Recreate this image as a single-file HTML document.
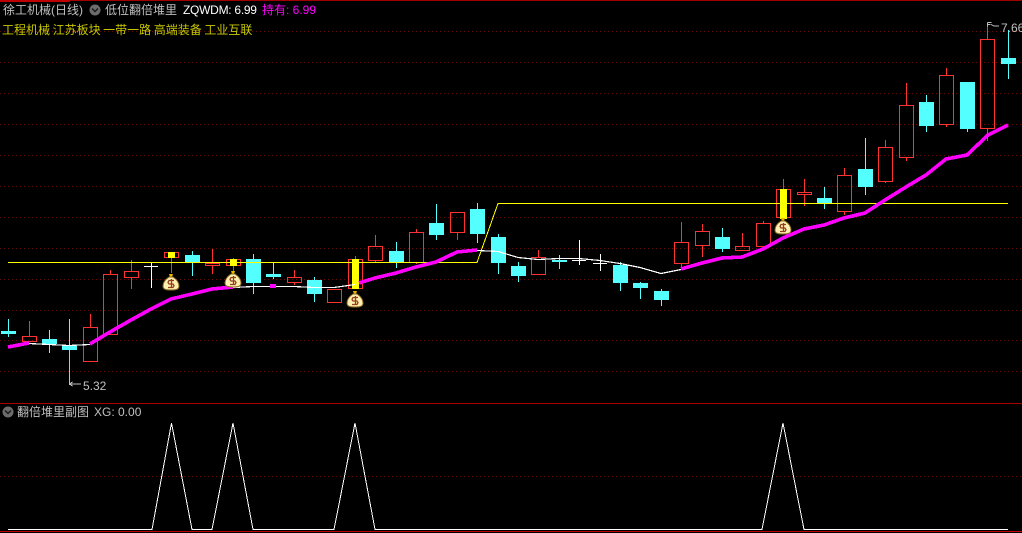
<!DOCTYPE html>
<html><head><meta charset="utf-8">
<style>
html,body{margin:0;padding:0;background:#000;width:1022px;height:533px;overflow:hidden}
#w{position:relative;width:1022px;height:533px;overflow:hidden;background:#000;font:12px/14px "Liberation Sans","WenQuanYi Zen Hei","Noto Sans CJK SC",sans-serif}
#w span{position:absolute;white-space:pre}
svg{position:absolute;left:0;top:0}
</style></head><body><div id="w">
<svg width="1022" height="533" viewBox="0 0 1022 533">
<defs>
<g id="bag">
<path d="M-2-8h4l-1 3h-2z" fill="#e8b800"/>
<path d="M-2-5h4c3 2 6 5 6 9 0 3-2 4-8 4s-8-1-8-4c0-4 3-7 6-9z" fill="#fff0b0" stroke="#8a6a20" stroke-width="1"/>
<path d="M3-1.500h-5l-1 2 1 1.500h4l1 1.500-1 2h-5M0.500-3v9" fill="none" stroke="#90401f" stroke-width="1.300"/>
</g>
<g id="chev"><circle r="5.500" fill="#6c6c6c"/><path d="M-3-1.500l3 3 3-3" fill="none" stroke="#1a1a1a" stroke-width="1.400"/></g>
</defs>
<g shape-rendering="crispEdges">
<g stroke="#640808" stroke-width="1" stroke-dasharray="1 3" fill="none">
<path d="M0 31.500H1022"/><path d="M0 62.500H1022"/><path d="M0 93.500H1022"/><path d="M0 124.500H1022"/><path d="M0 155.500H1022"/><path d="M0 186.500H1022"/><path d="M0 217.500H1022"/><path d="M0 248.500H1022"/><path d="M0 279.500H1022"/><path d="M0 310.500H1022"/><path d="M0 340.500H1022"/><path d="M0 371.500H1022"/><path d="M0 476.500H1022"/>
</g>
<rect x="0" y="0" width="1022" height="1" fill="#a00000"/>
<rect x="0" y="0" width="70" height="2" fill="#c00000"/>
<rect x="0" y="403" width="1022" height="1" fill="#a80000"/>
<rect x="0" y="531" width="1022" height="1" fill="#c00000"/>

<path d="M8.500 319V337M49.500 330V353M69.500 319V385M192.500 251V276M253.500 254V294M273.500 263V279M314.500 277V302M396.500 242V268M436.500 204V240M477.500 203V243M498.500 234V274M518.500 262V282M559.500 255V269M620.500 262V291M640.500 282V299M661.500 289V306M722.500 228V252M824.500 187V209M865.500 138V195M926.500 95V132M967.500 129V132M1008.500 30V79" stroke="#54ffff" fill="none"/>
<path d="M1 331h15v3h-15zM42 339h15v5h-15zM62 345h15v5h-15zM185 255h15v7h-15zM246 259h15v24h-15zM266 274h15v3h-15zM307 280h15v14h-15zM389 251h15v11h-15zM429 223h15v12h-15zM470 209h15v25h-15zM491 237h15v26h-15zM511 266h15v10h-15zM552 260h15v2h-15zM613 265h15v18h-15zM633 283h15v5h-15zM654 291h15v9h-15zM715 237h15v12h-15zM817 198h15v5h-15zM858 169h15v18h-15zM919 102h15v24h-15zM960 82h15v47h-15zM1001 58h15v6h-15z" fill="#54ffff"/>

<path d="M29.500 321V336M90.500 314V327M110.500 270V274M131.500 260V271M131.500 278V289M171.500 257V273M212.500 249V263M212.500 265V274M233.500 258V259M233.500 265V272M294.500 270V277M294.500 282V285M355.500 256V259M375.500 235V246M375.500 261V262M416.500 229V232M416.500 263V264M457.500 233V240M538.500 250V257M681.500 222V242M681.500 264V270M702.500 224V231M702.500 246V257M742.500 233V246M763.500 221V223M783.500 179V189M804.500 179V192M804.500 195V206M844.500 168V175M844.500 212V215M885.500 140V147M885.500 182V183M906.500 83V105M906.500 158V161M946.500 68V75M946.500 125V127M987.500 23V39M987.500 129V141" stroke="#ff3232" fill="none"/>
<path d="M22.500 336.500h14v5h-14zM83.500 327.500h14v34h-14zM103.500 274.500h14v60h-14zM124.500 271.500h14v6h-14zM164.500 252.500h14v5h-14zM205.500 263.500h14v2h-14zM226.500 259.500h14v6h-14zM287.500 277.500h14v5h-14zM327.500 289.500h14v13h-14zM348.500 259.500h14v29h-14zM368.500 246.500h14v14h-14zM409.500 232.500h14v30h-14zM450.500 212.500h14v20h-14zM531.500 257.500h14v17h-14zM674.500 242.500h14v21h-14zM695.500 231.500h14v14h-14zM735.500 246.500h14v4h-14zM756.500 223.500h14v23h-14zM776.500 189.500h14v28h-14zM797.500 192.500h14v2h-14zM837.500 175.500h14v36h-14zM878.500 147.500h14v34h-14zM899.500 105.500h14v52h-14zM939.500 75.500h14v49h-14zM980.500 39.500h14v89h-14z" fill="none" stroke="#ff3232"/>
<path d="M168 252h7v6h-7zM230 259h7v7h-7zM352 259h7v30h-7zM780 189h7v30h-7z" fill="#ffff00"/>

<path d="M151.500 263V288M144 266.500H158M579.500 240V265M572 260.500H586M600.500 254V271M593 263.500H607" stroke="#fff" fill="none"/>

<polyline points="8,262.500 477,262.500 498,203.500 1008,203.500" fill="none" stroke="#ffff00" stroke-width="1"/>

<polyline points="29,343.500 49,344.500 69,345.500 90,344.500" fill="none" stroke="#fff" stroke-width="1.200"/>
<polyline points="233,287.500 253,286.500 273,286.500 294,286.500 314,287.500 334,287.500 355,284.500" fill="none" stroke="#fff" stroke-width="1.200"/>
<polyline points="477,250.500 498,251.500 518,257.500 538,259.500 559,258.500 579,258.500 600,260.500 620,263.500 640,267.500 661,273.500 681,269.500" fill="none" stroke="#fff" stroke-width="1.200"/>

<g fill="none" stroke="#ff00ff" stroke-width="3.600" stroke-linejoin="round">
<polyline points="8,347 29,343"/>
<polyline points="90,344 110,332 131,320 151,309 171,299 192,294 212,289 233,287"/>
<polyline points="270,286 276,286"/>
<polyline points="359,283 375,278 396,273 416,267 436,262 457,252 477,250"/>
<polyline points="681,269 702,263 722,258 742,257 763,249 783,238 804,229 824,225 844,218 865,213 885,200 906,187 926,175 946,159 967,155 988,135 1008,125"/>
</g>

<polyline points="8,529.500 152,529.500 171.500,423 192,529.500 212,529.500 233,423 253,529.500 334,529.500 355,423 375,529.500 762,529.500 783,423 804,529.500 1008,529.500" fill="none" stroke="#fff" stroke-width="1"/>

<path d="M69.500 350V384M69.500 384H81M69.500 384l3-2M69.500 384l3 2" stroke="#c0c0c0" fill="none"/>
<path d="M987.500 22.500h4M987.500 22.500v4M987.500 24.500l3 0M991 24.500l3 1.500h5" stroke="#c0c0c0" fill="none"/>
</g>
<use href="#bag" x="171" y="282"/>
<use href="#bag" x="233" y="279"/>
<use href="#bag" x="355" y="299"/>
<use href="#bag" x="783" y="226"/>
<use href="#chev" x="95" y="10"/>
<use href="#chev" x="8" y="412"/>
</svg>
<span style="left:3px;top:3px;color:#c0c0c0">徐工机械(日线)</span>
<span style="left:105px;top:3px;color:#c0c0c0">低位翻倍堆里</span>
<span style="left:183px;top:3px;color:#fff;letter-spacing:-.27px">ZQWDM: 6.99</span>
<span style="left:262px;top:3px;color:#ff00ff">持有: 6.99</span>
<span style="left:2px;top:23px;color:#c8c800;word-spacing:-.75px">工程机械 江苏板块 一带一路 高端装备 工业互联</span>
<span style="left:83px;top:379px;color:#c0c0c0">5.32</span>
<span style="left:1001px;top:21px;color:#c0c0c0">7.66</span>
<span style="left:17px;top:405px;color:#c0c0c0">翻倍堆里副图</span>
<span style="left:94px;top:405px;color:#c0c0c0">XG: 0.00</span>
</div></body></html>
